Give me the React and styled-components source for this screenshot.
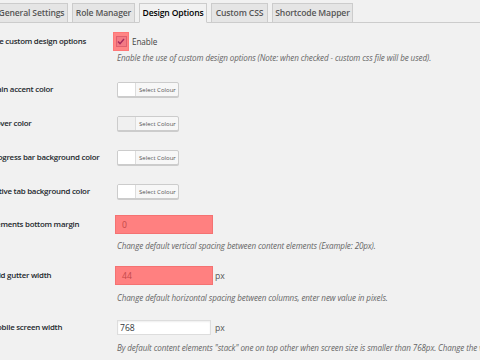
// Libraries
import React from 'react';

// Styles
import styled, { createGlobalStyle } from 'styled-components';

const GlobalStyle = createGlobalStyle`
  html, body {
    margin: 0;
    padding: 0;
    background: #f1f1f1;
    overflow: hidden;
  }
  body {
    font-family: "Open Sans", "Noto Sans", sans-serif;
    color: #444;
  }
`;

const PageStyle = styled.div`
  width: 480px;
  height: 360px;
  overflow: hidden;
`;

const TabBarStyle = styled.nav`
  display: flex;
  align-items: flex-end;
  gap: 4px;
  height: 22px;
  margin-left: -5px;
  border-bottom: 1px solid #ccc;
`;

const TabStyle = styled.div`
  display: flex;
  align-items: center;
  justify-content: center;
  box-sizing: border-box;
  width: ${(p) => p.$w}px;
  height: 20px;
  margin-bottom: -1px;
  border: 1px solid #ccc;
  border-bottom-color: ${(p) => (p.$active ? '#f1f1f1' : '#ccc')};
  background: ${(p) => (p.$active ? '#f1f1f1' : '#e5e5e5')};
  color: ${(p) => (p.$active ? '#000' : '#555')};
  font-size: 8.6px;
  font-weight: 600;
  letter-spacing: -0.15px;
  white-space: nowrap;
`;

const FormStyle = styled.div`
  margin-left: -10px;
`;

const RowStyle = styled.div`
  display: grid;
  grid-template-columns: 127px 1fr;
  padding-top: ${(p) => p.$top}px;
`;

const LabelStyle = styled.div`
  font-size: 7.9px;
  font-weight: 600;
  color: #23282d;
  line-height: ${(p) => p.$h}px;
  white-space: nowrap;
  letter-spacing: -0.25px;
`;

const FieldStyle = styled.div`
  display: flex;
  flex-direction: column;
  align-items: flex-start;
`;

const InlineStyle = styled.div`
  display: flex;
  align-items: center;
  gap: 3px;
  height: ${(p) => p.$h}px;
`;

const CheckHighlightStyle = styled.span`
  display: flex;
  align-items: center;
  justify-content: center;
  width: 16px;
  height: 19px;
  margin-left: -4px;
  background: #ff8585;
  box-shadow: inset 0 0 0 1px #f77;
`;

const CheckBoxStyle = styled.span`
  display: flex;
  align-items: center;
  justify-content: center;
  width: 9px;
  height: 9px;
  border: 1px solid #e0606e;
  background: #f37a84;
`;

const CheckTextStyle = styled.span`
  font-size: 8.2px;
  color: #444;
  letter-spacing: -0.1px;
`;

const DescStyle = styled.p`
  margin: ${(p) => p.$gap}px 0 0;
  font-size: 8.05px;
  font-style: italic;
  color: #666;
  line-height: 12px;
  white-space: nowrap;
  letter-spacing: -0.1px;
`;

const PickerStyle = styled.div`
  display: flex;
  box-sizing: border-box;
  height: 15px;
  border: 1px solid #ccc;
  border-radius: 2px;
  box-shadow: 0 1px 0 #ccc;
  background: #f7f7f7;
  overflow: hidden;
`;

const SwatchStyle = styled.span`
  width: 17px;
  background: ${(p) => p.$color};
  border-right: 1px solid #ddd;
`;

const PickerButtonStyle = styled.span`
  display: flex;
  align-items: center;
  padding: 0 2px 0 3px;
  font-size: 6px;
  color: #555;
  white-space: nowrap;
`;

const InputWrapStyle = styled.span`
  display: flex;
  padding: 2px;
  background: ${(p) => (p.$hot ? '#ff8080' : 'transparent')};
  box-shadow: ${(p) => (p.$hot ? 'inset 0 0 0 1px #f47272' : 'none')};
  margin-left: -2px;
`;

const InputStyle = styled.span`
  display: flex;
  align-items: center;
  box-sizing: border-box;
  width: 94px;
  height: 15px;
  padding-left: ${(p) => (p.$hot ? 4 : 2)}px;
  border: 1px solid ${(p) => (p.$hot ? '#ff8080' : '#ddd')};
  background: ${(p) => (p.$hot ? '#ff8080' : '#fff')};
  box-shadow: ${(p) => (p.$hot ? 'none' : 'inset 0 1px 2px rgba(0,0,0,.07)')};
  color: ${(p) => (p.$hot ? '#c44848' : '#32373c')};
  font-size: 8.6px;
`;

const UnitStyle = styled.span`
  font-size: 8.6px;
  color: #555;
  margin-left: -1px;
`;

// Components
const tabs = [
  { label: 'General Settings', w: 73 },
  { label: 'Role Manager', w: 63 },
  { label: 'Design Options', w: 68, active: true },
  { label: 'Custom CSS', w: 57 },
  { label: 'Shortcode Mapper', w: 81 },
];

const Check = function () {
  return (
    <CheckHighlightStyle>
      <CheckBoxStyle>
        <svg width="8" height="7" viewBox="0 0 8 7">
          <path d="M1 3.6 L3 5.6 L7 1" fill="none" stroke="#a52a5c" strokeWidth="1.4" />
        </svg>
      </CheckBoxStyle>
    </CheckHighlightStyle>
  );
};

const ColourRow = function (props) {
  const { label, color, top } = props;
  return (
    <RowStyle $top={top}>
      <LabelStyle $h={15}>{label}</LabelStyle>
      <FieldStyle>
        <PickerStyle>
          <SwatchStyle $color={color} />
          <PickerButtonStyle>Select Colour</PickerButtonStyle>
        </PickerStyle>
      </FieldStyle>
    </RowStyle>
  );
};

const InputRow = function (props) {
  const { label, value, hot, unit, desc, top, gap } = props;
  return (
    <RowStyle $top={top}>
      <LabelStyle $h={19}>{label}</LabelStyle>
      <FieldStyle>
        <InlineStyle $h={19}>
          <InputWrapStyle $hot={hot}>
            <InputStyle $hot={hot}>{value}</InputStyle>
          </InputWrapStyle>
          {unit && <UnitStyle>{unit}</UnitStyle>}
        </InlineStyle>
        <DescStyle $gap={gap}>{desc}</DescStyle>
      </FieldStyle>
    </RowStyle>
  );
};

const App = function () {
  return (
    <PageStyle>
      <GlobalStyle />
      <TabBarStyle>
        {tabs.map((t) => (
          <TabStyle key={t.label} $w={t.w} $active={t.active}>
            {t.label}
          </TabStyle>
        ))}
      </TabBarStyle>
      <FormStyle>
        <RowStyle $top={9}>
          <LabelStyle $h={19}>Use custom design options</LabelStyle>
          <FieldStyle>
            <InlineStyle $h={19}>
              <Check />
              <CheckTextStyle>Enable</CheckTextStyle>
            </InlineStyle>
            <DescStyle $gap={1}>
              Enable the use of custom design options (Note: when checked - custom css file will be used).
            </DescStyle>
          </FieldStyle>
        </RowStyle>
        <ColourRow top={18} label="Main accent color" color="#fff" />
        <ColourRow top={19} label="Hover color" color="#f0f0f0" />
        <ColourRow top={19} label="Progress bar background color" color="#fff" />
        <ColourRow top={19} label="Active tab background color" color="#fff" />
        <InputRow
          top={16}
          gap={6}
          label="Elements bottom margin"
          value="0"
          hot
          desc="Change default vertical spacing between content elements (Example: 20px)."
        />
        <InputRow
          top={14}
          gap={7}
          label="Grid gutter width"
          value="44"
          hot
          unit="px"
          desc="Change default horizontal spacing between columns, enter new value in pixels."
        />
        <InputRow
          top={14}
          gap={5}
          label="Mobile screen width"
          value="768"
          unit="px"
          desc={'By default content elements "stack" one on top other when screen size is smaller than 768px. Change the value to change "stacking" size.'}
        />
      </FormStyle>
    </PageStyle>
  );
};

export default App;
